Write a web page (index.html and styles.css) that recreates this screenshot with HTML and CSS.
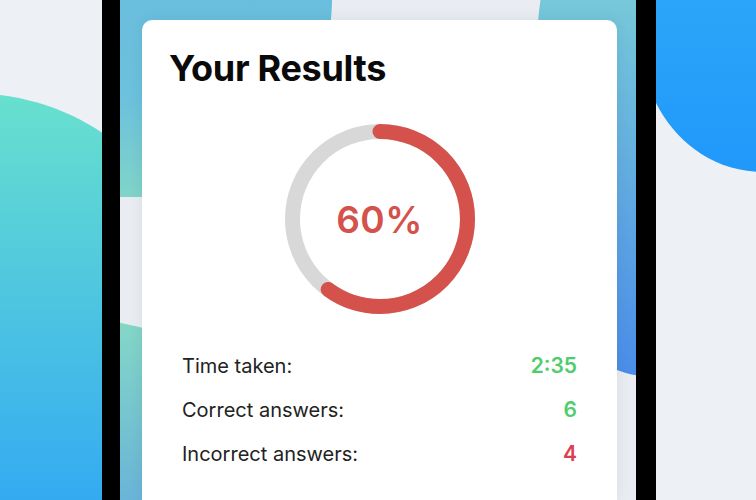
FILE: index.html
```html
<!DOCTYPE html>
<html lang="en">
<head>
<meta charset="utf-8">
<title>Your Results</title>
<link rel="stylesheet" href="styles.css">
</head>
<body>
<svg class="page-bg" width="756" height="500" viewBox="0 0 756 500" aria-hidden="true">
  <defs>
    <linearGradient id="lg-left" x1="0" y1="95" x2="0" y2="500" gradientUnits="userSpaceOnUse">
      <stop offset="0" stop-color="#68e0ce"/>
      <stop offset="1" stop-color="#34abf1"/>
    </linearGradient>
    <linearGradient id="lg-right" x1="0" y1="0" x2="0" y2="175" gradientUnits="userSpaceOnUse">
      <stop offset="0" stop-color="#2ba5f8"/>
      <stop offset="1" stop-color="#2098fb"/>
    </linearGradient>
  </defs>
  <path d="M0 95 C40 100 80 115 112 140 L112 500 L0 500 Z" fill="url(#lg-left)"/>
  <path d="M640 -10 L640 80 L656 103 C675 140 710 170 760 172 L760 -10 Z" fill="url(#lg-right)"/>
</svg>

<div class="phone">
  <div class="screen">
    <svg class="screen-bg" width="516" height="500" viewBox="0 0 516 500" aria-hidden="true">
      <defs>
        <linearGradient id="sg-a" x1="0" y1="0" x2="0" y2="197" gradientUnits="userSpaceOnUse">
          <stop offset="0" stop-color="#6abedd"/>
          <stop offset="0.5" stop-color="#6cc1dc"/>
          <stop offset="1" stop-color="#80d4c9"/>
        </linearGradient>
        <linearGradient id="sg-b" x1="0" y1="0" x2="0" y2="375" gradientUnits="userSpaceOnUse">
          <stop offset="0" stop-color="#77c8d9"/>
          <stop offset="1" stop-color="#4a8de9"/>
        </linearGradient>
        <linearGradient id="sg-c" x1="0" y1="323" x2="0" y2="500" gradientUnits="userSpaceOnUse">
          <stop offset="0" stop-color="#83d7c6"/>
          <stop offset="1" stop-color="#6ab4d8"/>
        </linearGradient>
      </defs>
      <path d="M-10 -10 L212 -10 C214 60 180 190 100 197 L-10 197 Z" fill="url(#sg-a)"/>
      <path d="M422 -10 C405 90 420 300 497 370 C505 373 512 375 526 377 L526 -10 Z" fill="url(#sg-b)"/>
      <path d="M-10 321 C60 333 200 380 300 520 L-10 520 Z" fill="url(#sg-c)"/>
    </svg>

    <section class="card">
      <h1 class="title">Your Results</h1>

      <div class="ring">
        <svg class="ring-svg" width="190" height="190" viewBox="0 0 190 190" aria-hidden="true">
          <circle cx="95" cy="95" r="87.5" fill="none" stroke="#d8d8d8" stroke-width="15"/>
          <circle cx="95" cy="95" r="87.5" fill="none" stroke="#d4524b" stroke-width="15"
                  stroke-linecap="round" stroke-dasharray="329.87 549.78"
                  transform="rotate(-90 95 95)"/>
        </svg>
        <span class="ring-label">60%</span>
      </div>

      <dl class="stats">
        <div class="stat">
          <dt class="stat-label">Time taken:</dt>
          <dd class="stat-value good">2:35</dd>
        </div>
        <div class="stat">
          <dt class="stat-label">Correct answers:</dt>
          <dd class="stat-value good">6</dd>
        </div>
        <div class="stat">
          <dt class="stat-label">Incorrect answers:</dt>
          <dd class="stat-value bad">4</dd>
        </div>
      </dl>
    </section>
  </div>
</div>
</body>
</html>
```

FILE: styles.css
```css
* {
  box-sizing: border-box;
}

html, body {
  margin: 0;
  padding: 0;
}

body {
  width: 756px;
  height: 500px;
  overflow: hidden;
  position: relative;
  background: #edf1f5;
  font-family: Inter, "Noto Sans", "Liberation Sans", sans-serif;
  color: #1f1f1f;
}

.page-bg {
  position: absolute;
  left: 0;
  top: 0;
  z-index: 0;
  display: block;
}

.phone {
  position: relative;
  z-index: 1;
  margin-left: 102px;
  width: 554px;
  height: 500px;
  background: #000;
  padding: 0 20px 0 18px;
}

.screen {
  position: relative;
  height: 100%;
  background: #e9edf2;
  overflow: hidden;
  padding: 20px 19px 0 22px;
}

.screen-bg {
  position: absolute;
  left: 0;
  top: 0;
  display: block;
}

.card {
  position: relative;
  height: 100%;
  background: #ffffff;
  border-radius: 10px 10px 0 0;
  box-shadow: 0 0 14px rgba(30, 45, 70, 0.08);
  padding: 28px 40px 0 40px;
}

.title {
  margin: 0 0 0 -13px;
  font-size: 36px;
  line-height: 40px;
  font-weight: 700;
  letter-spacing: -0.3px;
  color: #0a0a0a;
}

.ring {
  position: relative;
  width: 190px;
  height: 190px;
  margin: 36px auto 0;
  display: flex;
  align-items: center;
  justify-content: center;
}

.ring-svg {
  position: absolute;
  left: 0;
  top: 0;
  display: block;
}

.ring-label {
  position: relative;
  font-size: 37px;
  font-weight: 600;
  color: #d4524b;
  letter-spacing: 0.5px;
}

.stats {
  margin: 40px 0 0 0;
  display: flex;
  flex-direction: column;
  gap: 20px;
}

.stat {
  display: flex;
  justify-content: space-between;
  align-items: baseline;
  line-height: 24px;
}

.stat-label {
  margin: 0;
  font-size: 20px;
  font-weight: 400;
  color: #222;
}

.stat-value {
  margin: 0;
  font-size: 21px;
  font-weight: 600;
}

.stat-value.good {
  color: #4fcd6b;
}

.stat-value.bad {
  color: #dc3f52;
}
```
